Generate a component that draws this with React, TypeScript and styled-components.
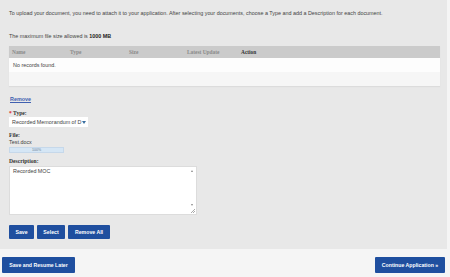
import React from "react";
import styled, { createGlobalStyle } from "styled-components";

const GlobalStyle = createGlobalStyle`
  html, body {
    margin: 0;
    padding: 0;
    background: #f5f5f5;
    font-family: "Liberation Sans", Arial, sans-serif;
    color: #333;
  }
`;

const Page = styled.div`
  width: 450px;
  height: 277px;
  display: flex;
  flex-direction: column;
`;

const Panel = styled.div`
  background: #e8e8e8;
  margin: 0 3px 0 0;
  padding: 10px 9px 10px 9px;
  display: flex;
  flex-direction: column;
`;

const Intro = styled.p`
  margin: 0;
  font-size: 5.4px;
  color: #444;
  line-height: 7px;
`;

const MaxSize = styled.p`
  margin: 16px 0 0;
  font-size: 5.4px;
  color: #444;
  line-height: 7px;

  b {
    color: #222;
  }
`;

const Table = styled.div`
  margin-top: 6px;
  width: 431px;
  background: #f7f7f7;
  box-shadow: 0 1px 1px #dcdcdc;
`;

const HeaderRow = styled.div`
  display: grid;
  grid-template-columns: 58px 59px 58px 54px 1fr;
  height: 12px;
  align-items: center;
  background: #cbcbcb;
  padding-left: 3px;
`;

const HeadCell = styled.div<{ $strong?: boolean }>`
  font-family: "Liberation Serif", "Times New Roman", serif;
  font-size: 5.4px;
  font-weight: bold;
  color: ${(p) => (p.$strong ? "#333" : "#8a8a8a")};
`;

const EmptyRow = styled.div`
  height: 28px;
  padding: 4px 0 0 4px;
  box-sizing: border-box;
  font-size: 5.4px;
  color: #444;
  background: linear-gradient(#fdfdfd 0 14px, #f6f6f6 14px);
`;

const Form = styled.div`
  margin-top: 10px;
  display: flex;
  flex-direction: column;
  align-items: flex-start;
`;

const RemoveLink = styled.a`
  font-size: 5.4px;
  font-weight: bold;
  color: #4060b0;
  text-decoration: underline;
  margin-left: 1px;
  line-height: 7px;
`;

const Label = styled.div<{ $gap?: number }>`
  font-family: "Liberation Serif", "Times New Roman", serif;
  font-size: 5.6px;
  font-weight: bold;
  color: #333;
  margin-top: ${(p) => p.$gap ?? 0}px;
  line-height: 7px;

  span {
    color: #e03030;
  }
`;

const SelectBox = styled.div`
  margin-top: 0;
  width: 79px;
  height: 10px;
  background: #fff;
  display: flex;
  align-items: center;
  justify-content: space-between;
  padding: 0 2px 0 3px;
  box-sizing: border-box;
  font-size: 5.4px;
  color: #444;
  white-space: nowrap;
  overflow: hidden;
`;

const Arrow = styled.span`
  width: 0;
  height: 0;
  border-left: 2.5px solid transparent;
  border-right: 2.5px solid transparent;
  border-top: 3px solid #3a6ea0;
  flex-shrink: 0;
`;

const FileName = styled.div`
  font-size: 5.4px;
  color: #444;
  margin-top: 0;
  line-height: 7px;
`;

const Progress = styled.div`
  margin-top: 1px;
  width: 55px;
  height: 6px;
  background: #d5e6f5;
  border: 1px solid #c6d8ea;
  box-sizing: border-box;
  display: flex;
  align-items: center;
  justify-content: center;
  font-size: 3.6px;
  color: #6a7d90;
`;

const TextArea = styled.div`
  position: relative;
  margin-top: 1px;
  width: 188px;
  height: 49px;
  background: #fff;
  border: 1px solid #dcdcdc;
  box-sizing: border-box;
  padding: 1px 3px;
  font-size: 5.4px;
  color: #444;
`;

const ScrollArrow = styled.span<{ $down?: boolean }>`
  position: absolute;
  right: 3px;
  ${(p) => (p.$down ? "bottom: 8px;" : "top: 3px;")}
  width: 0;
  height: 0;
  border-left: 1.5px solid transparent;
  border-right: 1.5px solid transparent;
  ${(p) =>
    p.$down ? "border-top: 2px solid #888;" : "border-bottom: 2px solid #888;"}
`;

const Grip = styled.span`
  position: absolute;
  right: 1px;
  bottom: 1px;
  width: 4px;
  height: 4px;
  background: linear-gradient(135deg, transparent 45%, #aaa 45% 55%, transparent 55% 70%, #aaa 70% 80%, transparent 80%);
`;

const ButtonRow = styled.div`
  margin-top: 10px;
  display: flex;
  gap: 3px;
`;

const Button = styled.button<{ $w: number }>`
  width: ${(p) => p.$w}px;
  height: 14px;
  padding: 0;
  border: none;
  border-radius: 1px;
  background: #1f4f9f;
  color: #fff;
  font-family: "Liberation Sans", Arial, sans-serif;
  font-size: 5.2px;
  font-weight: bold;
  cursor: pointer;
`;

const Footer = styled.div`
  display: flex;
  justify-content: space-between;
  padding: 8px 5px 0 2px;
`;

const BigButton = styled(Button)`
  height: 16px;
`;

export default function App() {
  return (
    <Page>
      <GlobalStyle />
      <Panel>
        <Intro>
          To upload your document, you need to attach it to your application. After selecting your
          documents, choose a Type and add a Description for each document.
        </Intro>
        <MaxSize>
          The maximum file size allowed is <b>1000 MB</b>
        </MaxSize>
        <Table>
          <HeaderRow>
            <HeadCell>Name</HeadCell>
            <HeadCell>Type</HeadCell>
            <HeadCell>Size</HeadCell>
            <HeadCell>Latest Update</HeadCell>
            <HeadCell $strong>Action</HeadCell>
          </HeaderRow>
          <EmptyRow>No records found.</EmptyRow>
        </Table>
        <Form>
          <RemoveLink href="#">Remove</RemoveLink>
          <Label $gap={7}>
            <span>* </span>Type:
          </Label>
          <SelectBox>
            Recorded Memorandum of D
            <Arrow />
          </SelectBox>
          <Label $gap={5}>File:</Label>
          <FileName>Test.docx</FileName>
          <Progress>100%</Progress>
          <Label $gap={5}>Description:</Label>
          <TextArea>
            Recorded MOC
            <ScrollArrow />
            <ScrollArrow $down />
            <Grip />
          </TextArea>
          <ButtonRow>
            <Button $w={25}>Save</Button>
            <Button $w={28}>Select</Button>
            <Button $w={42}>Remove All</Button>
          </ButtonRow>
        </Form>
      </Panel>
      <Footer>
        <BigButton $w={73}>Save and Resume Later</BigButton>
        <BigButton $w={70}>Continue Application »</BigButton>
      </Footer>
    </Page>
  );
}
